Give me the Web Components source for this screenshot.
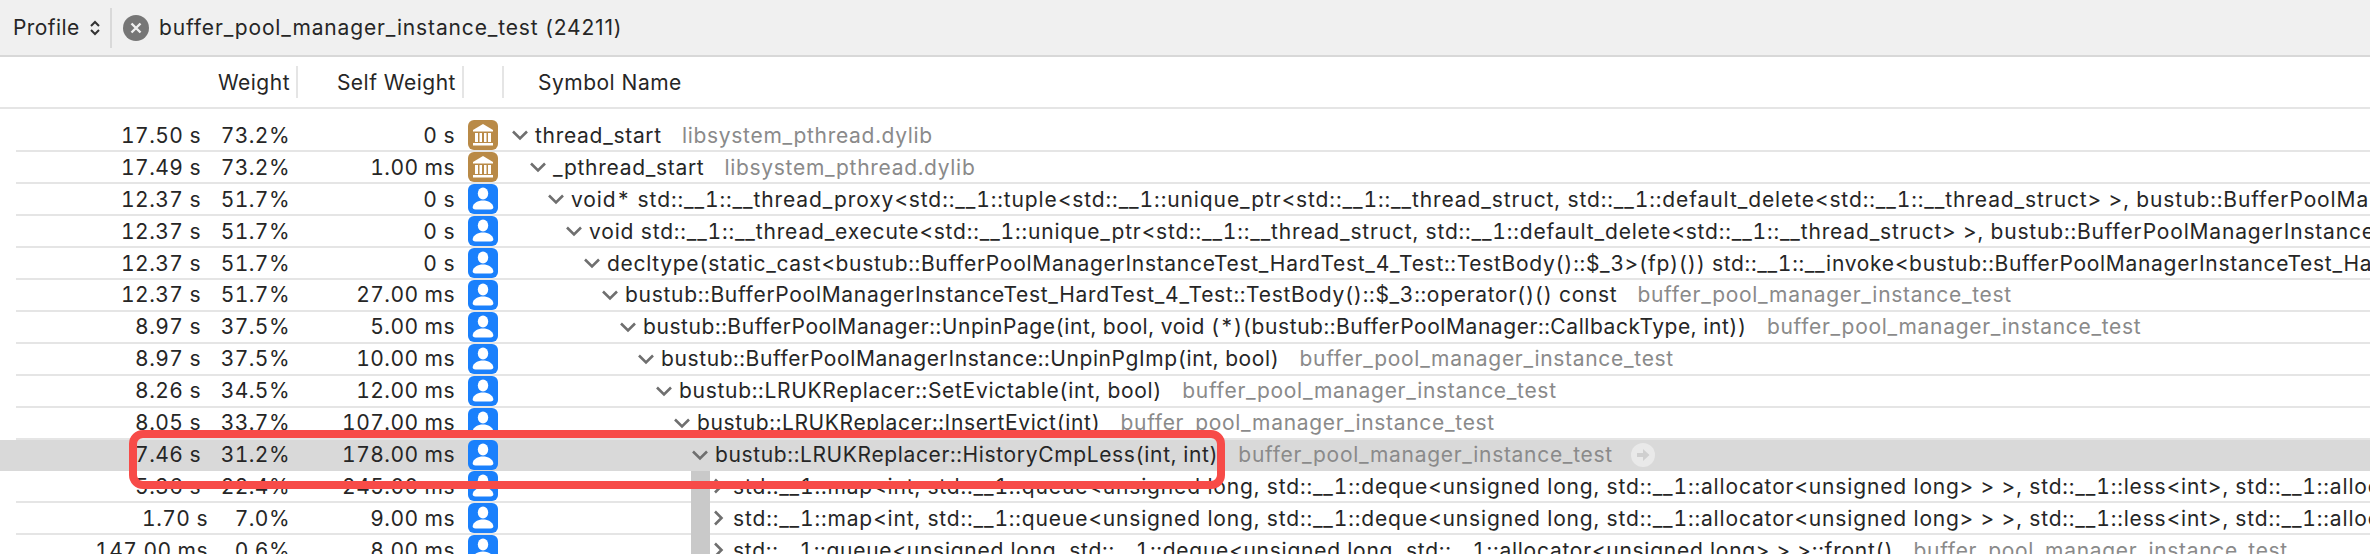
<!DOCTYPE html>
<html>
<head>
<meta charset="utf-8">
<title>Profile</title>
<style>
  html, body { margin: 0; padding: 0; background: #fff; }
  body { font-family: Inter, "Liberation Sans", sans-serif; overflow: hidden; width: 2370px; height: 554px; }
</style>
</head>
<body>
<profile-app></profile-app>

<template id="tool-bar">
  <style>
    :host { display: flex; align-items: center; height: 55px; background: #f0f0f0; border-bottom: 2px solid #d8d8d8; color: #262626; font-size: 21px; letter-spacing: 0.4px; }
    .profile { margin-left: 13px; width: 65px; }
    svg { display: block; }
    .updown { margin-left: 12px; }
    .divider { width: 2px; height: 40px; background: #d9d9d9; margin-left: 10px; }
    .close { margin-left: 11px; }
    .title { margin-left: 10px; letter-spacing: 0.85px; }
  </style>
  <span class="profile">Profile</span>
  <svg class="updown" width="10" height="16" viewBox="0 0 10 16"><path d="M1 6l4-4 4 4M1 10l4 4 4-4" fill="none" stroke="#333" stroke-width="2"/></svg>
  <span class="divider"></span>
  <svg class="close" width="26" height="26" viewBox="0 0 26 26"><circle cx="13" cy="13" r="13" fill="#767676"/><path d="M8.500 8.500l9 9M17.500 8.500l-9 9" stroke="#f0f0f0" stroke-width="2.400"/></svg>
  <span class="title">buffer_pool_manager_instance_test (24211)</span>
</template>

<template id="table-head">
  <style>
    :host { display: flex; height: 52px; align-items: center; border-bottom: 2px solid #e5e5e5; color: #262626; font-size: 21px; letter-spacing: 0.5px; box-sizing: border-box; }
    .cell { display: flex; align-items: center; justify-content: flex-end; height: 32px; border-right: 2px solid #e5e5e5; box-sizing: border-box; padding-right: 6px; }
    .weight { width: 298px; }
    .self { width: 166px; }
    .blank { width: 40px; }
    .name { margin-left: 34px; }
  </style>
  <div class="cell weight">Weight</div>
  <div class="cell self">Self Weight</div>
  <div class="cell blank"></div>
  <div class="name">Symbol Name</div>
</template>

<template id="call-row">
  <style>
    :host { display: block; height: 31.92px; color: #262626; font-size: 21px; letter-spacing: 0.7px; font-feature-settings: "tnum"; white-space: nowrap; }
    .row { position: relative; display: flex; align-items: center; height: 100%; box-sizing: border-box; margin-left: 16px; border-bottom: 2px solid #e5e5e5; }
    :host([selected]) .row { margin-left: 0; padding-left: 16px; background: #d9d9d9; border-bottom-color: #d9d9d9; }
    .time, .pct, .self { text-align: right; flex: none; letter-spacing: 0.45px; }
    .time { width: 185px; }
    .pct { width: 89px; }
    :host([tight]) .time { width: 192px; }
    :host([tight]) .pct { width: 82px; }
    .self { width: 165px; }
    .icon { margin-left: 13px; flex: none; }
    .indent { flex: none; }
    .chevron { flex: none; display: block; }
    .sym { margin-left: 7px; }
    .lib { margin-left: 20px; color: #8a8a8a; }
    .guide { position: absolute; top: 0; bottom: -2px; width: 19px; background: #c9c9c9; }
    .go { margin-left: 18px; flex: none; }
    svg { display: block; }
  </style>
  <div class="row">
    <span class="time"></span>
    <span class="pct"></span>
    <span class="self"></span>
    <span class="icon"></span>
    <span class="indent"></span>
    <svg class="chevron" width="16" height="16" viewBox="0 0 16 16"><path class="chev" fill="none" stroke="#6f6f6f" stroke-width="2.600"/></svg>
    <span class="sym"></span>
    <span class="lib"></span>
  </div>
</template>

<script>
const ICONS = {
  user: `<svg width="30" height="30" viewBox="0 0 30 30"><rect width="30" height="30" rx="6" fill="#1a80fc"/><ellipse cx="15" cy="9.500" rx="5.200" ry="6" fill="#fff"/><path d="M7.500 25.500c-2 0-3-1-2.800-2.500 .8-4 5-6.500 10.300-6.500s9.500 2.500 10.300 6.500c.2 1.500-.8 2.500-2.800 2.500z" fill="#fff"/></svg>`,
  lib: `<svg width="30" height="30" viewBox="0 0 30 30"><rect width="30" height="30" rx="6" fill="#b98a47"/><path d="M15 4L5 10v1.500h20V10z" fill="#fff"/><path d="M7 13h3v9H7zM11.500 13h2.500v9h-2.500zM16 13h2.500v9H16zM20 13h3v9h-3z" fill="#fff"/><rect x="5" y="23" width="20" height="2.500" fill="#fff"/></svg>`
};

const GO_ARROW = `<svg class="go" width="24" height="24" viewBox="0 0 24 24"><circle cx="12" cy="12" r="12" fill="#e9e9e9"/><path d="M6 10h6V6l6.500 6-6.500 6v-4H6z" fill="#cfcfcf"/></svg>`;

class ToolBar extends HTMLElement {
  constructor() {
    super();
    const template = document.getElementById('tool-bar').content;
    this.attachShadow({ mode: 'open' }).appendChild(template.cloneNode(true));
  }
}

class TableHead extends HTMLElement {
  constructor() {
    super();
    const template = document.getElementById('table-head').content;
    this.attachShadow({ mode: 'open' }).appendChild(template.cloneNode(true));
  }
}

class CallRow extends HTMLElement {
  constructor() {
    super();
    const template = document.getElementById('call-row').content;
    this.attachShadow({ mode: 'open' }).appendChild(template.cloneNode(true));
  }

  connectedCallback() {
    const root = this.shadowRoot;
    const level = Number(this.getAttribute('level'));
    root.querySelector('.time').textContent = this.getAttribute('time');
    root.querySelector('.pct').textContent = this.getAttribute('pct');
    root.querySelector('.self').textContent = this.getAttribute('self');
    root.querySelector('.icon').innerHTML = ICONS[this.getAttribute('icon') || 'user'];
    root.querySelector('.indent').style.width = (14 + 18 * level) + 'px';
    root.querySelector('.chev').setAttribute('d', this.hasAttribute('closed') ? 'M5 1.500l6.500 6.500-6.500 6.500' : 'M1 4.500l7 7 7-7');
    const sym = root.querySelector('.sym');
    sym.textContent = this.getAttribute('sym');
    // the long template names run a little wider or narrower than the font here
    if (this.getAttribute('track')) sym.style.letterSpacing = this.getAttribute('track') + 'px';
    const lib = root.querySelector('.lib');
    if (this.getAttribute('lib')) lib.textContent = this.getAttribute('lib');
    else lib.remove();
    if (this.hasAttribute('selected')) lib.insertAdjacentHTML('afterend', GO_ARROW);
    if (this.hasAttribute('guide')) {
      const bar = document.createElement('span');
      bar.className = 'guide';
      bar.style.left = '675px';
      root.querySelector('.row').appendChild(bar);
    }
  }
}

class RedMark extends HTMLElement {
  constructor() {
    super();
    this.attachShadow({ mode: 'open' }).innerHTML = `
      <style>
        :host { position: absolute; left: 129px; top: 430px; width: 1096px; height: 59px; box-sizing: border-box; border: 8px solid #f74b48; border-radius: 14px; }
      </style>`;
  }
}

class ProfileApp extends HTMLElement {
  constructor() {
    super();
    const BIN = 'buffer_pool_manager_instance_test';
    const PTHREAD = 'libsystem_pthread.dylib';
    const rows = [
      { time: '17.50 s', pct: '73.2%', self: '0 s', icon: 'lib', level: 0, sym: 'thread_start', lib: PTHREAD },
      { time: '17.49 s', pct: '73.2%', self: '1.00 ms', icon: 'lib', level: 1, sym: '_pthread_start', lib: PTHREAD },
      { time: '12.37 s', pct: '51.7%', self: '0 s', level: 2, track: 0.9, sym: 'void* std::__1::__thread_proxy<std::__1::tuple<std::__1::unique_ptr<std::__1::__thread_struct, std::__1::default_delete<std::__1::__thread_struct> >, bustub::BufferPoolManager' },
      { time: '12.37 s', pct: '51.7%', self: '0 s', level: 3, track: 0.83, sym: 'void std::__1::__thread_execute<std::__1::unique_ptr<std::__1::__thread_struct, std::__1::default_delete<std::__1::__thread_struct> >, bustub::BufferPoolManagerInstance' },
      { time: '12.37 s', pct: '51.7%', self: '0 s', level: 4, sym: 'decltype(static_cast<bustub::BufferPoolManagerInstanceTest_HardTest_4_Test::TestBody()::$_3>(fp)()) std::__1::__invoke<bustub::BufferPoolManagerInstanceTest_Hard' },
      { time: '12.37 s', pct: '51.7%', self: '27.00 ms', level: 5, sym: 'bustub::BufferPoolManagerInstanceTest_HardTest_4_Test::TestBody()::$_3::operator()() const', lib: BIN },
      { time: '8.97 s', pct: '37.5%', self: '5.00 ms', level: 6, track: 0.57, sym: 'bustub::BufferPoolManager::UnpinPage(int, bool, void (*)(bustub::BufferPoolManager::CallbackType, int))', lib: BIN },
      { time: '8.97 s', pct: '37.5%', self: '10.00 ms', level: 7, track: 0.6, sym: 'bustub::BufferPoolManagerInstance::UnpinPgImp(int, bool)', lib: BIN },
      { time: '8.26 s', pct: '34.5%', self: '12.00 ms', level: 8, sym: 'bustub::LRUKReplacer::SetEvictable(int, bool)', lib: BIN },
      { time: '8.05 s', pct: '33.7%', self: '107.00 ms', level: 9, track: 0.64, sym: 'bustub::LRUKReplacer::InsertEvict(int)', lib: BIN },
      { time: '7.46 s', pct: '31.2%', self: '178.00 ms', level: 10, track: 0.64, sym: 'bustub::LRUKReplacer::HistoryCmpLess(int, int)', lib: BIN, selected: true },
      { time: '5.36 s', pct: '22.4%', self: '245.00 ms', level: 11, closed: true, guide: true, track: 0.85, sym: 'std::__1::map<int, std::__1::queue<unsigned long, std::__1::deque<unsigned long, std::__1::allocator<unsigned long> > >, std::__1::less<int>, std::__1::allocator' },
      { time: '1.70 s', pct: '7.0%', self: '9.00 ms', level: 11, closed: true, guide: true, tight: true, track: 0.85, sym: 'std::__1::map<int, std::__1::queue<unsigned long, std::__1::deque<unsigned long, std::__1::allocator<unsigned long> > >, std::__1::less<int>, std::__1::allocator' },
      { time: '147.00 ms', pct: '0.6%', self: '8.00 ms', level: 11, closed: true, guide: true, tight: true, track: 0.75, sym: 'std::__1::queue<unsigned long, std::__1::deque<unsigned long, std::__1::allocator<unsigned long> > >::front()', lib: BIN }
    ];

    const shadowRoot = this.attachShadow({ mode: 'open' });
    shadowRoot.innerHTML = `
      <style>
        :host { display: block; position: relative; width: 2370px; height: 554px; overflow: hidden; background: #fff; }
        .list { padding-top: 11.5px; }
      </style>
      <tool-bar></tool-bar>
      <table-head></table-head>
      <div class="list"></div>
      <red-mark></red-mark>
    `;

    const list = shadowRoot.querySelector('.list');
    rows.forEach(row => {
      const el = document.createElement('call-row');
      Object.keys(row).forEach(key => {
        if (row[key] === true) el.setAttribute(key, '');
        else el.setAttribute(key, row[key]);
      });
      list.appendChild(el);
    });
  }
}

customElements.define('tool-bar', ToolBar);
customElements.define('table-head', TableHead);
customElements.define('call-row', CallRow);
customElements.define('red-mark', RedMark);
customElements.define('profile-app', ProfileApp);
</script>
</body>
</html>
